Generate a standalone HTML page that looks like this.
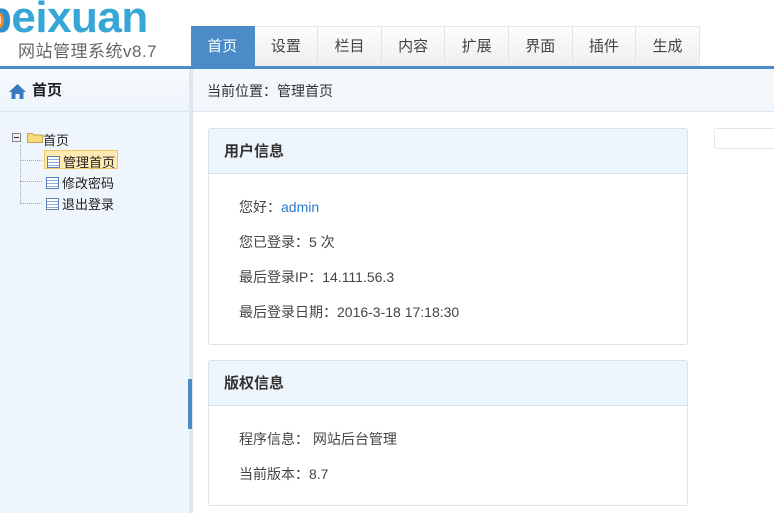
<!DOCTYPE html>
<html><head><meta charset="utf-8">
<style>
*{margin:0;padding:0;box-sizing:border-box}
body{width:774px;height:513px;overflow:hidden;background:#fff;font-family:"Liberation Sans","Noto Sans CJK SC",sans-serif;font-size:14px;color:#333;position:relative}
.abs{position:absolute}
.logo{left:-15px;top:-4px;font-size:44px;line-height:44px;font-weight:bold;color:#35a6d6;white-space:nowrap;font-family:"Liberation Sans",sans-serif;letter-spacing:-0.5px}
.logo span{color:#2a8fd0;text-shadow:-3px 0 0 #f08a24}
.sub{left:18px;top:37px;font-size:17px;color:#666;letter-spacing:0.5px}
.tabs{left:191px;top:26px;height:40px;display:flex}
.tab{width:63.6px;height:40px;line-height:40px;text-align:center;font-size:15px;color:#444;background:linear-gradient(#fdfdfd,#eeeeee);border-right:1px solid #e4e4e4;border-top:1px solid #e8e8e8}
.tab.on{background:#4a8bc8;color:#fff;border-color:#4a8bc8}
.bar{left:0;top:66px;width:774px;height:3px;background:#4a8bc8}
.side{left:0;top:69px;width:189px;height:444px;background:#eef5fc}
.strip{left:189px;top:69px;width:4px;height:444px;background:#dde7f1}
.mark{left:188px;top:379px;width:4px;height:50px;background:#4a8bc8}
.shead{left:0;top:69px;width:189px;height:43px;border-bottom:1px solid #dce6ef;background:linear-gradient(#f7fbfe,#edf4fb);font-weight:bold;font-size:15px;line-height:43px;padding-left:32px;color:#222}
.crumb{left:193px;top:69px;width:581px;height:43px;background:#f2f7fc;border-bottom:1px solid #dde6ee;line-height:45px;padding-left:14px;font-size:14px;color:#333}
.tree{font-size:13px;color:#222}
.card{left:208px;width:480px;border:1px solid #dbe3ea;border-radius:3px;background:#fff}
.ch{height:45px;background:#eef6fd;border-bottom:1px solid #dbe3ea;line-height:45px;padding-left:15px;font-weight:bold;font-size:15px;color:#333}
.row{padding-left:30px;height:35px;line-height:35px;font-size:14px;color:#444}
.ico{display:inline-block;width:13px;height:12px;border:1px solid #5a7fb5;background:repeating-linear-gradient(#fff 0 2px,#8fb0da 2px 3px);vertical-align:-1px;margin-right:3px}
</style></head><body>
<div class="abs logo"><span>p</span>eixuan</div>
<div class="abs sub">网站管理系统v8.7</div>
<div class="abs tabs"><div class="tab on">首页</div><div class="tab">设置</div><div class="tab">栏目</div><div class="tab">内容</div><div class="tab">扩展</div><div class="tab">界面</div><div class="tab">插件</div><div class="tab">生成</div></div>
<div class="abs bar"></div>
<div class="abs side"></div>
<div class="abs strip"></div>
<div class="abs mark"></div>
<div class="abs shead">首页</div>
<svg class="abs" style="left:8px;top:83px" width="19" height="17" viewBox="0 0 19 17"><path d="M9.5 1 L1 9 L3.5 9 L3.5 16 L7.5 16 L7.5 11 L11.5 11 L11.5 16 L15.5 16 L15.5 9 L18 9 Z" fill="#3b78c0"/></svg>
<div class="abs crumb">当前位置：管理首页</div>
<div class="abs tree" style="left:12px;top:130px">
 <svg class="abs" style="left:0;top:3px" width="9" height="9"><rect x="0.5" y="0.5" width="8" height="8" fill="#eee" stroke="#888"/><path d="M2 4.5h5" stroke="#333"/></svg>
 <svg class="abs" style="left:15px;top:1px" width="16" height="12"><path d="M0.5 2.5h5l1 1.5h9v7.5h-15z" fill="#f8dc7a" stroke="#c9a44a"/></svg>
 <span class="abs" style="left:31px;top:0;white-space:nowrap">首页</span>
</div>
<div class="abs" style="left:20px;top:145px;height:58px;border-left:1px dotted #aaa"></div>
<div class="abs" style="left:20px;top:160px;width:22px;border-top:1px dotted #aaa"></div>
<div class="abs" style="left:20px;top:181px;width:22px;border-top:1px dotted #aaa"></div>
<div class="abs" style="left:20px;top:203px;width:22px;border-top:1px dotted #aaa"></div>
<div class="abs tree" style="left:44px;top:150px;height:19px;width:74px;background:#ffe9b3;border:1px solid #f0c86a;padding:1px 0 0 2px;white-space:nowrap"><span class="ico"></span>管理首页</div>
<div class="abs tree" style="left:46px;top:173px;white-space:nowrap"><span class="ico"></span>修改密码</div>
<div class="abs tree" style="left:46px;top:194px;white-space:nowrap"><span class="ico"></span>退出登录</div>

<div class="abs card" style="top:128px;height:217px">
 <div class="ch">用户信息</div>
 <div style="height:16px"></div>
 <div class="row">您好：<span style="color:#2a7ac8">admin</span></div>
 <div class="row">您已登录：5 次</div>
 <div class="row">最后登录IP：14.111.56.3</div>
 <div class="row">最后登录日期：2016-3-18 17:18:30</div>
</div>
<div class="abs card" style="top:360px;height:146px">
 <div class="ch">版权信息</div>
 <div style="height:16px"></div>
 <div class="row">程序信息： 网站后台管理</div>
 <div class="row">当前版本：8.7</div>
</div>
<div class="abs" style="left:714px;top:128px;width:70px;height:21px;border:1px solid #e2e6ea;border-radius:3px"></div>
</body></html>
